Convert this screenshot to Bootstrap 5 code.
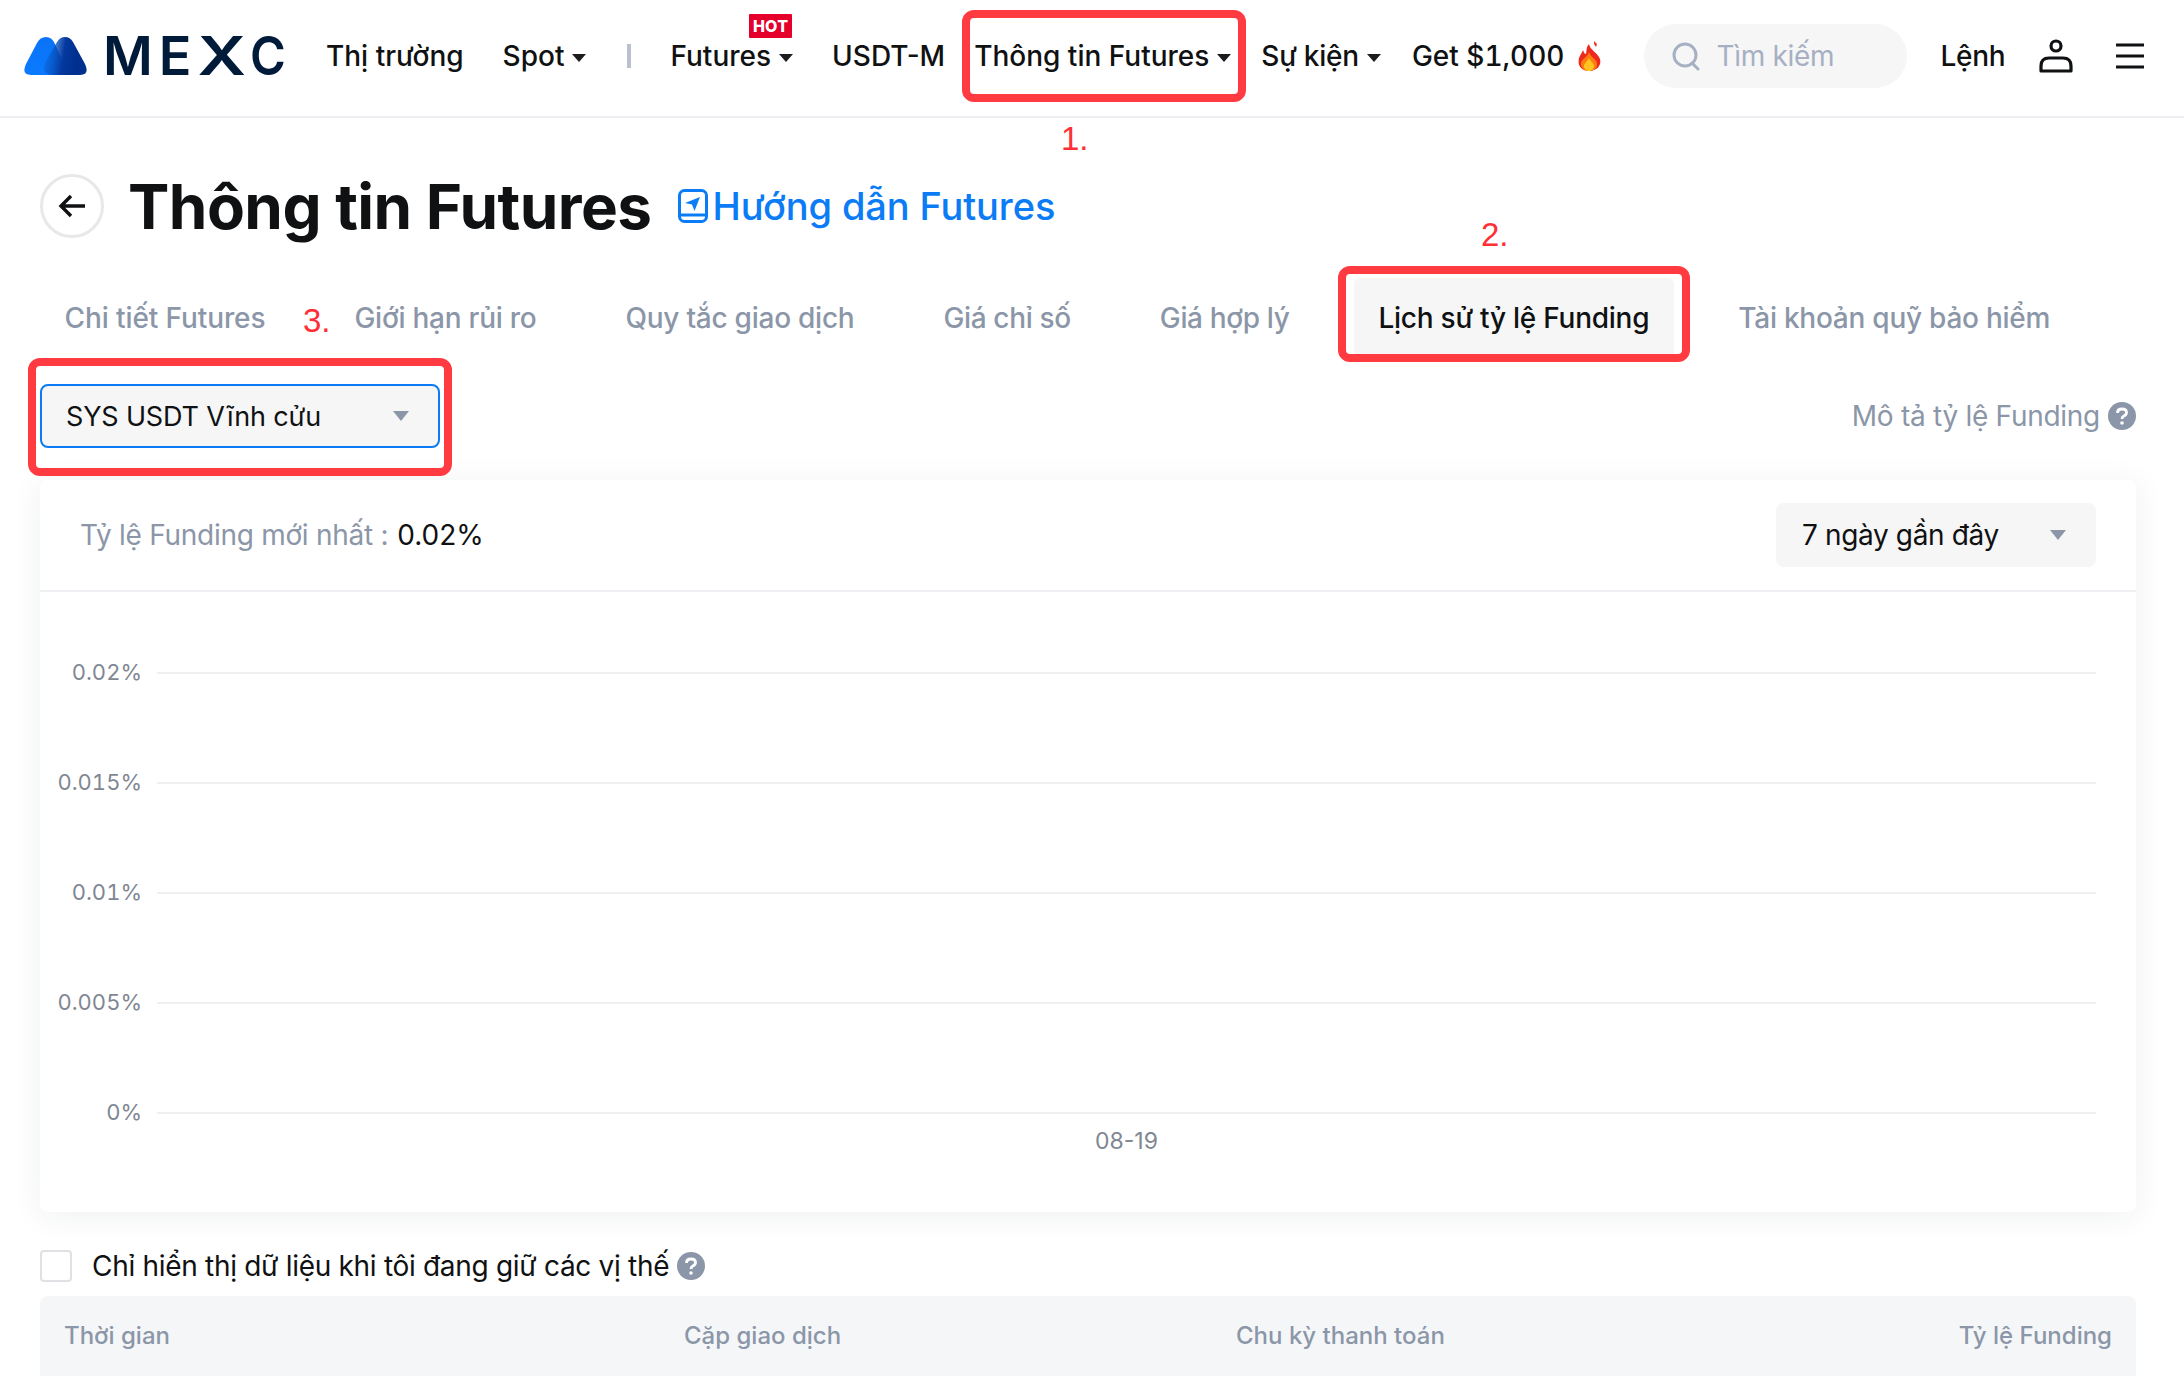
<!DOCTYPE html>
<html lang="vi">
<head>
<meta charset="utf-8">
<title>Thông tin Futures</title>
<link href="https://cdn.jsdelivr.net/npm/bootstrap@5.3.0/dist/css/bootstrap.min.css" rel="stylesheet">
<style>
html,body{background:#fff;height:100%;overflow:hidden}
body{font-family:Inter,"Liberation Sans",sans-serif;color:#0f1112;position:relative}
.topbar{height:118px;border-bottom:2px solid #eceef2;padding:0 0 4px;flex-wrap:nowrap;justify-content:flex-start}
.brand-box{margin-left:24px;gap:16px;width:261px;flex:none}
.brand-mark{flex:none}
.brand-word{font-size:54px;font-weight:600;letter-spacing:6px;color:#001a3a;line-height:1;flex:none;white-space:nowrap}
.brand-x{display:inline-block;transform:scaleX(1.25);margin:0 3px 0 5px}
.brand-c{display:inline-block;transform:scaleX(.9);transform-origin:left center}
.top-item{font-size:28px;font-weight:500;color:#0f1112;white-space:nowrap;line-height:34px;position:relative;padding:0}
.caret-down{display:inline-block;width:0;height:0;border-left:7px solid transparent;border-right:7px solid transparent;border-top:8px solid #1a1c1f;margin-left:8px;vertical-align:4px}
.m-41{margin-left:41px}.m-39{margin-left:39px}.m-29{margin-left:29px}.m-30{margin-left:30px}.m-31{margin-left:31px}.m-33{margin-left:33px}
.tight-text{letter-spacing:-.25px}
.tab-nums{font-variant-numeric:tabular-nums}
.top-sep{width:4px;height:24px;background:#b9c0cf;margin-left:41px}
.hot-tag{position:absolute;top:-25px;right:1px;width:43px;text-align:center;background:#e4002b;color:#fff;font-size:16px;font-weight:800;line-height:24px;height:24px;border-radius:1px;letter-spacing:.2px}
.flame-ic{margin-left:13px}
.search-pill{width:263px;height:64px;border-radius:32px;background:#f6f6f7;margin-left:41px;padding-left:28px;gap:16px;color:#a6b0c2;font-size:28px;letter-spacing:-.3px}
.user-ic{margin-left:34px}
.menu-ic{margin-left:41px}
.main-wrap{padding:0 48px 0 40px}
.head-row{margin-top:56px;height:63px}
.back-ring{width:64px;height:64px;border-radius:50%;border:3px solid #e8e8e8;flex:none}
.page-title{font-size:62px;font-weight:700;color:#0f1112;margin:0 0 0 24px;line-height:63px;letter-spacing:-.55px;padding-top:2px}
.guide-link{color:#0b7cf5;font-size:38px;font-weight:500;text-decoration:none;margin-left:26px;gap:5px;line-height:50px;letter-spacing:-.12px}
.tab-row{margin-top:41px;gap:40px;flex-wrap:nowrap}
.tab-link{font-size:28px;font-weight:500;color:#8b96a8;padding:0 24.5px;height:78px;line-height:80px;border-radius:6px 6px 0 0;white-space:nowrap;letter-spacing:-.25px}
.tab-link.tab-wide{letter-spacing:-.1px}
.tab-link.tab-narrow{letter-spacing:-.35px}
.tab-link.active-tab{background:#f6f6f7;color:#0f1112}
.filter-row{margin-top:28px;height:64px}
.pair-select{width:400px;height:64px;border:2px solid #0b7cf5;border-radius:8px;background:#f6f6f7;padding:2px 29px 0 24px;font-size:27px;letter-spacing:-.16px;color:#0f1112}
.pair-select .grey-caret{margin-top:-2px}
.grey-caret{width:0;height:0;border-left:8px solid transparent;border-right:8px solid transparent;border-top:10px solid #8b96a8}
.desc-link{font-size:28px;color:#8b96a8;gap:8px;letter-spacing:-.28px}
.chart-card{margin-top:32px;border:0;border-radius:8px;box-shadow:0 4px 32px rgba(30,40,60,.07);height:732px}
.chart-head{height:112px;border-bottom:2px solid #efeff4;padding:0 40px}
.latest-label{font-size:28px;color:#8b96a8;gap:9px;letter-spacing:-.28px}
.latest-value{color:#0f1112;letter-spacing:0}
.range-select{width:320px;height:64px;border-radius:8px;background:#f6f6f7;padding:0 30px 0 26px;font-size:28px;letter-spacing:-.36px;color:#0f1112}
.plot-area{padding-top:80px;gap:108px}
.grid-row{height:2px}
.grid-label{width:102px;text-align:right;font-size:22px;color:#7f8794;line-height:30px;flex:none;font-variant-numeric:tabular-nums;padding-bottom:2px}
.grid-line{flex:1;height:2px;background:#efeff1;margin:0 40px 0 15px}
.axis-label{margin:12px 40px 0 117px;text-align:center;font-size:23px;color:#7f8794;line-height:30px}
.check-row{margin-top:38px;height:32px}
.plain-check{width:32px;height:32px;border:2px solid #dfe1e5;border-radius:4px;background:#fff;flex:none}
.check-text{font-size:28px;margin-left:20px;color:#0f1112;letter-spacing:-.3px}
.help-dot{flex:none}
.table-top{margin-top:14px;height:80px;background:#f5f6f8;border-radius:8px 8px 0 0;padding:0 24px;font-size:24px;font-weight:500;color:#8b96a8}
.col-time{width:620px}.col-pair{width:552px}
.mark-box{position:absolute;border:8px solid #ff3a40;border-radius:12px;pointer-events:none}
.box-one{left:962px;top:10px;width:284px;height:92px}
.box-two{left:1338px;top:266px;width:352px;height:96px}
.box-three{left:28px;top:358px;width:424px;height:118px}
.mark-num{position:absolute;color:#ff2f36;font-family:"Liberation Sans",sans-serif;font-size:33px;line-height:36px}
.num-one{left:1061px;top:121px}
.num-two{left:1481px;top:217px}
.num-three{left:303px;top:303px}
</style>
</head>
<body>
<nav class="navbar topbar d-flex align-items-center">
  <div class="brand-box d-flex align-items-center">
    <svg class="brand-mark" width="63" height="39" viewBox="0 0 63 39" aria-hidden="true">
      <defs>
        <linearGradient id="lg1" x1="0" y1="1" x2="1" y2="0"><stop offset="0" stop-color="#0a7cff"/><stop offset="1" stop-color="#0a70f5"/></linearGradient>
        <linearGradient id="lg2" x1="0" y1="0.5" x2="0.75" y2="0.6"><stop offset="0" stop-color="#0a66d8" stop-opacity=".45"/><stop offset=".6" stop-color="#04389e"/><stop offset="1" stop-color="#00308f"/></linearGradient>
      </defs>
      <path d="M2 27 L13 6 Q16 0 22 0 Q28 0 31 7 L45 38 L7 38 Q-3 38 2 27Z" fill="url(#lg1)"/>
      <path d="M21 26 L33 5 Q36 0 41 0 Q46 0 49 5 L61 27 Q66 38 56 38 L28 38 Q17 38 21 26Z" fill="url(#lg2)"/>
    </svg>
    <span class="brand-word">ME<span class="brand-x">X</span><span class="brand-c">C</span></span>
  </div>
  <a class="top-item nav-link m-41">Thị trường</a>
  <a class="top-item nav-link m-39">Spot<i class="caret-down"></i></a>
  <span class="top-sep"></span>
  <a class="top-item nav-link m-39">Futures<i class="caret-down"></i><span class="hot-tag">HOT</span></a>
  <a class="top-item nav-link m-39">USDT-M</a>
  <a class="top-item nav-link m-29">Thông tin Futures<i class="caret-down"></i></a>
  <a class="top-item nav-link m-30 tight-text">Sự kiện<i class="caret-down"></i></a>
  <a class="top-item nav-link m-31 tab-nums">Get $1,000</a>
  <svg class="flame-ic" width="26" height="30" viewBox="0 0 26 30" aria-hidden="true">
    <path d="M12 3 C13 9 20 11 23 18 C25 25 19 30 12 30 C5 30 0 25 2 17 C3 14 5 12 6 9 C7 12 8 13 9 13 C10 9 9 6 12 3Z" fill="#ee2a1f"/>
    <path d="M12 11 C13 16 20 18 20 23 C20 28 16 30 12 30 C8 30 4 27 4 23 C4 18 10 17 12 11Z" fill="#ff7d10"/>
    <path d="M12 17 C13 20 17 22 17 25 C17 28 14 30 12 30 C9 30 7 28 7 25 C7 22 11 20 12 17Z" fill="#ffc41f"/>
    <path d="M17 0 L20 3 L19 6 L17 3Z" fill="#f0352a"/>
  </svg>
  <div class="search-pill d-flex align-items-center">
    <svg width="28" height="30" viewBox="0 0 28 30" fill="none" stroke="#a6b0c2" stroke-width="3" aria-hidden="true"><circle cx="13" cy="14" r="11"/><path d="M20 22 L26 28" stroke-linecap="round"/></svg>
    <span>Tìm kiếm</span>
  </div>
  <a class="top-item nav-link m-33 tight-text">Lệnh</a>
  <svg class="user-ic" width="34" height="34" viewBox="0 0 34 34" fill="none" stroke="#0f1112" stroke-width="3.2" aria-hidden="true"><circle cx="17" cy="7" r="5"/><path d="M2 32 V27 Q2 19 10 19 H24 Q32 19 32 27 V32 Z" stroke-linejoin="round"/></svg>
  <svg class="menu-ic" width="32" height="26" viewBox="0 0 32 26" stroke="#0f1112" stroke-width="3" aria-hidden="true"><path d="M2 2 H30 M2 13 H30 M2 24 H30"/></svg>
</nav>

<main class="main-wrap">
  <div class="head-row d-flex align-items-center">
    <a class="back-ring d-flex align-items-center justify-content-center">
      <svg width="28" height="24" viewBox="0 0 28 24" fill="none" stroke="#0f1112" stroke-width="3.4" aria-hidden="true"><path d="M27 12 H3 M13 2 L3 12 L13 22"/></svg>
    </a>
    <h1 class="page-title">Thông tin Futures</h1>
    <a class="guide-link d-flex align-items-center">
      <svg width="30" height="34" viewBox="0 0 30 34" fill="none" stroke="#0b7cf5" stroke-width="3" aria-hidden="true"><rect x="1.5" y="1.5" width="27" height="31" rx="5"/><path d="M2 26 H28"/><rect x="6.5" y="6.5" width="17" height="14" rx="1" stroke-width="0"/><path d="M22 8 L7 14 L14 15.5 L16.5 22Z" fill="#0b7cf5" stroke="none"/></svg>
      <span>Hướng dẫn Futures</span>
    </a>
  </div>

  <div class="nav tab-row">
    <a class="nav-link tab-link tab-wide">Chi tiết Futures</a>
    <a class="nav-link tab-link">Giới hạn rủi ro</a>
    <a class="nav-link tab-link">Quy tắc giao dịch</a>
    <a class="nav-link tab-link tab-narrow">Giá chỉ số</a>
    <a class="nav-link tab-link tab-narrow">Giá hợp lý</a>
    <a class="nav-link tab-link active-tab">Lịch sử tỷ lệ Funding</a>
    <a class="nav-link tab-link">Tài khoản quỹ bảo hiểm</a>
  </div>

  <div class="filter-row d-flex align-items-center justify-content-between">
    <div class="pair-select d-flex align-items-center justify-content-between"><span>SYS USDT Vĩnh cửu</span><i class="grey-caret"></i></div>
    <div class="desc-link d-flex align-items-center"><span>Mô tả tỷ lệ Funding</span>
      <svg class="help-dot" width="28" height="28" viewBox="0 0 28 28" aria-hidden="true"><circle cx="14" cy="14" r="14" fill="#8b96a8"/><path d="M9.5 11 Q9.5 7 14 7 Q18.5 7 18.5 10.5 Q18.5 12.8 15.8 14 Q14 14.8 14 17" fill="none" stroke="#fff" stroke-width="2.8"/><circle cx="14" cy="21" r="1.8" fill="#fff"/></svg>
    </div>
  </div>

  <section class="card chart-card">
    <div class="chart-head d-flex align-items-center justify-content-between">
      <div class="latest-label d-flex"><span>Tỷ lệ Funding mới nhất :</span><span class="latest-value">0.02%</span></div>
      <div class="range-select d-flex align-items-center justify-content-between"><span>7 ngày gần đây</span><i class="grey-caret"></i></div>
    </div>
    <div class="plot-area d-flex flex-column">
      <div class="grid-row d-flex align-items-center"><span class="grid-label">0.02%</span><span class="grid-line"></span></div>
      <div class="grid-row d-flex align-items-center"><span class="grid-label">0.015%</span><span class="grid-line"></span></div>
      <div class="grid-row d-flex align-items-center"><span class="grid-label">0.01%</span><span class="grid-line"></span></div>
      <div class="grid-row d-flex align-items-center"><span class="grid-label">0.005%</span><span class="grid-line"></span></div>
      <div class="grid-row d-flex align-items-center"><span class="grid-label">0%</span><span class="grid-line"></span></div>
    </div>
    <div class="axis-label">08-19</div>
  </section>

  <div class="check-row d-flex align-items-center">
    <span class="plain-check"></span>
    <span class="check-text">Chỉ hiển thị dữ liệu khi tôi đang giữ các vị thế</span>
    <svg class="help-dot ms-2" width="28" height="28" viewBox="0 0 28 28" aria-hidden="true"><circle cx="14" cy="14" r="14" fill="#8b96a8"/><path d="M9.5 11 Q9.5 7 14 7 Q18.5 7 18.5 10.5 Q18.5 12.8 15.8 14 Q14 14.8 14 17" fill="none" stroke="#fff" stroke-width="2.8"/><circle cx="14" cy="21" r="1.8" fill="#fff"/></svg>
  </div>

  <div class="table-top d-flex align-items-center">
    <span class="col-time">Thời gian</span>
    <span class="col-pair">Cặp giao dịch</span>
    <span class="flex-grow-1">Chu kỳ thanh toán</span>
    <span>Tỷ lệ Funding</span>
  </div>
</main>

<div class="mark-box box-one"></div>
<div class="mark-box box-two"></div>
<div class="mark-box box-three"></div>
<span class="mark-num num-one">1.</span>
<span class="mark-num num-two">2.</span>
<span class="mark-num num-three">3.</span>
<script src="https://cdn.jsdelivr.net/npm/bootstrap@5.3.0/dist/js/bootstrap.bundle.min.js"></script>
</body>
</html>
